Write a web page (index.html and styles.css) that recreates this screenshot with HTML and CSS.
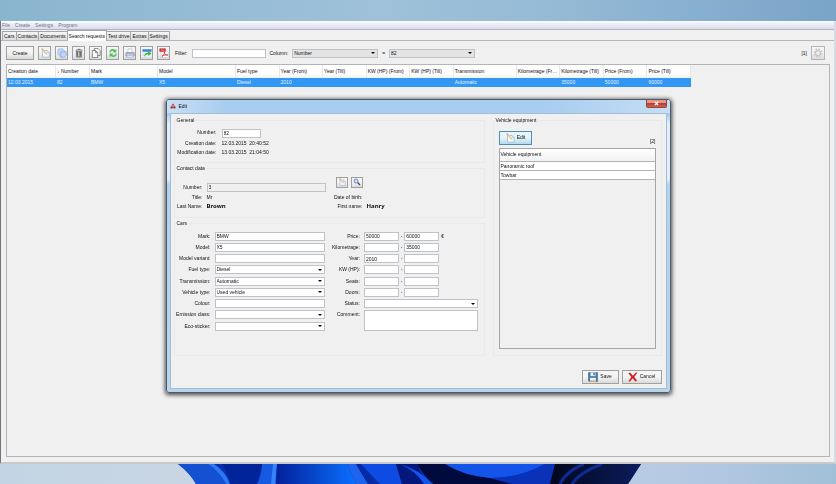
FILE: index.html
```
<!DOCTYPE html>
<html lang="en">
<head>
<meta charset="utf-8">
<meta name="viewport" content="width=device-width, initial-scale=1">
<title>Search requests</title>
<link rel="stylesheet" href="styles.css">
</head>
<body>

  <!-- shared icons -->
  <svg class="defs" aria-hidden="true">
    <symbol id="icon-edit" viewBox="0 0 24 24">
      <path d="M6 6h11l5 5v11H6z" fill="#f6f8ff" stroke="#8ba3cf" stroke-width="1.5"/>
      <path d="M17 6v5h5" fill="#dbe5f8" stroke="#8ba3cf"/>
      <path d="M3 2l3-1 11 12 1 3-4-1z" fill="#f0c266"/>
      <path d="M3 2l3-1 2 2-3 2z" fill="#d99a8a"/>
    </symbol>
  </svg>

  <!-- Main window -->
  <div class="window">
    <nav class="menubar">
      <button>File</button>
      <button>Create</button>
      <button>Settings</button>
      <button>Program</button>
    </nav>

    <div class="tabs">
      <button class="tab">Cars</button>
      <button class="tab">Contacts</button>
      <button class="tab">Documents</button>
      <button class="tab active">Search requests</button>
      <button class="tab">Test drive</button>
      <button class="tab">Extras</button>
      <button class="tab">Settings</button>
    </div>

    <main class="panel">
      <div class="toolbar">
        <button class="btn create">Create</button>
        <button class="btn tool" aria-label="Edit"><svg><use href="#icon-edit"/></svg></button>
        <button class="btn tool" aria-label="Duplicate">
          <svg viewBox="0 0 24 24"><rect x="2" y="2" width="13" height="14" rx="2" fill="#dbe8fd" stroke="#8fadE3" stroke-width="1.5"/><rect x="5" y="5" width="13" height="14" rx="2" fill="#dbe8fd" stroke="#8fade3" stroke-width="1.5"/><path d="M9 9h13v9l-4 4H9z" fill="#c2d8fb" stroke="#6a92da" stroke-width="1.5"/></svg>
        </button>
        <button class="btn tool" aria-label="Delete">
          <svg viewBox="0 0 24 24"><path d="M5 7h14l-1 15H6z" fill="#8b8b8b" stroke="#666"/><path d="M8 9v11M16 9v11" stroke="#666" stroke-width="2"/><path d="M11 9v11" stroke="#ddd" stroke-width="2"/><ellipse cx="12" cy="6" rx="8" ry="2.5" fill="#bbb" stroke="#666"/><path d="M9 3h6" stroke="#666" stroke-width="2"/></svg>
        </button>
        <button class="btn tool" aria-label="Copy">
          <svg viewBox="0 0 24 24" fill="#fafafa" stroke="#666" stroke-width="1.8"><path d="M8 1h9l5 5v12H8z"/><path d="M3 6h8l5 5v12H3z"/><path d="M11 6v5h5" fill="none"/></svg>
        </button>
        <button class="btn tool" aria-label="Refresh">
          <svg viewBox="0 0 24 24" fill="#4fbf57"><path d="M3 11c0-8 9-11 14-6l3-3v9h-9l3-3c-3-3-7-1-8 3z"/><path d="M21 13c0 8-9 11-14 6l-3 3v-9h9l-3 3c3 3 7 1 8-3z"/></svg>
        </button>
        <button class="btn tool" aria-label="Print">
          <svg viewBox="0 0 24 24"><path d="M7 2h10v9H7z" fill="#fff" stroke="#8d98b0"/><path d="M2 11h20v8H2z" fill="#b9c2d6" stroke="#7c88a2" stroke-width="1.5"/><path d="M6 15h12l2 7H4z" fill="#eef3ff" stroke="#7886a5"/><path d="M8 18h8" stroke="#7b9ae0" stroke-width="1.5"/></svg>
        </button>
        <button class="btn tool" aria-label="Export">
          <svg viewBox="0 0 24 24"><path d="M1 3h22v18H1z" fill="#e7f1fb"/><path d="M1 3h22v6H1z" fill="#3d83cf"/><path d="M2 14h8M2 18h6" stroke="#9fb6d0"/><path d="M5 21c1-7 5-10 10-10V7l8 6-8 6v-4c-4 0-7 2-10 6z" fill="#3eb93c"/></svg>
        </button>
        <button class="btn tool" aria-label="PDF">
          <svg viewBox="0 0 24 24"><path d="M5 5h12l5 5v13H5z" fill="#fff" stroke="#a9a9a9"/><path d="M1 1h15v8H1z" fill="#c8222b"/><path d="M4 5h9" stroke="#f3b6b6" stroke-width="2"/><path d="M7 20c4-2 6-6 6-10 1 5 3 7 8 7-6-1-10 0-14 3z" fill="none" stroke="#d8232a" stroke-width="2"/></svg>
        </button>
        <label class="filter-label" for="filter">Filter:</label>
        <input class="filter" type="text" id="filter">
        <label for="column">Column:</label>
        <select class="drop grey" id="column"><option>Number</option></select>
        <label for="columnValue">=</label>
        <select class="drop grey" id="columnValue"><option>82</option></select>
        <span class="count">[1]</span>
        <button class="btn tool gear" aria-label="Table settings">
          <svg viewBox="0 0 24 24" fill="none" stroke="#c4c4c4"><circle cx="12" cy="12" r="6" stroke-width="3"/><circle cx="12" cy="12" r="9.500" stroke-width="3" stroke-dasharray="4 3.460"/></svg>
        </button>
      </div>

      <div class="requests">
        <table>
          <colgroup>
            <col class="w-date"><col class="w-number"><col class="w-mark"><col class="w-model">
            <col><col><col><col><col>
            <col class="w-trans"><col><col><col><col>
          </colgroup>
          <thead>
            <tr>
              <th>Creation date</th><th>↓ Number</th><th>Mark</th><th>Model</th><th>Fuel type</th>
              <th>Year (From)</th><th>Year (Till)</th><th>KW (HP) (From)</th><th>KW (HP) (Till)</th>
              <th>Transmission</th><th>Kilometrage (Fr…</th><th>Kilometrage (Till)</th>
              <th>Price (From)</th><th>Price (Till)</th>
            </tr>
          </thead>
          <tbody>
            <tr class="selected">
              <td>12.03.2015</td><td>82</td><td>BMW</td><td>X5</td><td>Diesel</td>
              <td>2010</td><td></td><td></td><td></td>
              <td>Automatic</td><td></td><td>35000</td><td>50000</td><td>60000</td>
            </tr>
          </tbody>
        </table>
      </div>
    </main>
  </div>

  <!-- Desktop wallpaper under the window -->
  <svg class="wallpaper" viewBox="0 0 836 20" preserveAspectRatio="none" aria-hidden="true">
    <defs>
      <linearGradient id="petal"><stop offset="0" stop-color="#02209a"/><stop offset="1" stop-color="#0a70ff"/></linearGradient>
      <linearGradient id="dark"><stop offset="0" stop-color="#02061d"/><stop offset="1" stop-color="#0a1d5c"/></linearGradient>
    </defs>
    <path d="M178 0H641L628 20H196Q190 9 178 0z" fill="#0a2fae"/>
    <path d="M178 0H208Q220 8 226 20H196Q190 9 178 0z" fill="#1450d2"/>
    <path d="M208 0H214Q226 8 230 20H226Q220 8 208 0z" fill="#2b78f4"/>
    <path d="M222 0H262Q260 10 257 20H230Q228 9 222 0z" fill="#02249a"/>
    <path d="M262 0H277L276 20H257Q262 10 262 0z" fill="#1659e2"/>
    <path d="M273 0H277L275 20H271z" fill="#3684fa"/>
    <path d="M277 0H347L356 20H276z" fill="url(#petal)"/>
    <path d="M347 0H356L368 20H356z" fill="#1d63ee"/>
    <path d="M356 0H361L376 20H368z" fill="#062aa4"/>
    <path d="M361 0H396L402 20H380z" fill="#0d4be2"/>
    <path d="M396 0H417Q420 10 430 20H402z" fill="#03177c"/>
    <path d="M417 0H450Q468 11 490 14L520 20H433Q424 12 417 0z" fill="#010a3c"/>
    <path d="M400 0Q418 5 433 20H424Q416 7 400 0z" fill="#1255ee"/>
    <path d="M445 0H545Q520 14 490 14Q464 12 445 0z" fill="#1454ea"/>
    <path d="M545 0H558L550 20H512Q500 17 490 14Q520 14 545 0z" fill="#0a32b8"/>
    <path d="M555 0H641L628 20H550z" fill="url(#dark)"/>
    <path d="M584 0Q566 7 560 20M602 0Q580 8 572 20" fill="none" stroke="#0d2b92" stroke-width="3"/>
  </svg>

  <!-- Edit dialog -->
  <div class="overlay">
    <form class="dialog" role="dialog" aria-label="Edit">
      <div class="titlebar">
        <svg class="logo" viewBox="0 0 24 24"><path d="M12 1l5 8H7z" fill="#a33"/><path d="M3 13q9-8 18 0l2 8H1z" fill="#c33d3d"/><path d="M6 13h12" stroke="#dfe8f4" stroke-width="2"/><circle cx="6" cy="19" r="2.500" fill="#5b2d35"/><circle cx="18" cy="19" r="2.500" fill="#5b2d35"/></svg>
        <span>Edit</span>
        <button type="button" class="close" aria-label="Close"><svg viewBox="0 0 12 12"><path d="M2 2l8 8M10 2l-8 8" stroke="#fff" stroke-width="3"/></svg></button>
      </div>

      <div class="content">
        <div class="columns">
          <div class="left">
            <fieldset>
              <legend>General</legend>
              <div class="general">
                <label for="number">Number:</label>
                <input class="short" type="text" id="number" value="82">
                <span class="name">Creation date:</span><span class="stamp">12.03.2015&nbsp; 20:40:52</span>
                <span class="name">Modification date:</span><span class="stamp">13.03.2015&nbsp; 21:04:50</span>
              </div>
            </fieldset>

            <fieldset>
              <legend>Contact data</legend>
              <div class="contact">
                <label for="contactNumber">Number:</label>
                <input class="readonly" type="text" id="contactNumber" value="3" readonly>
                <div class="contact-buttons">
                  <button type="button" class="btn mini" aria-label="Edit contact"><svg><use href="#icon-edit"/></svg></button>
                  <button type="button" class="btn mini" aria-label="Find contact"><svg viewBox="0 0 24 24"><path d="M13 13l8 8" stroke="#444c66" stroke-width="4"/><circle cx="9" cy="9" r="6" fill="#cfe2fb" stroke="#5f7bb5" stroke-width="2.500"/></svg></button>
                </div>
                <span></span>
                <span class="name">Title:</span><span>Mr</span>
                <span class="name">Date of birth:</span><span></span>
                <span class="name">Last Name:</span><b>Brown</b>
                <span class="name">First name:</span><b>Hanry</b>
              </div>
            </fieldset>

            <fieldset>
              <legend>Cars</legend>
              <div class="cars">
                <label for="mark">Mark:</label><input type="text" id="mark" value="BMW">
                <label for="priceFrom">Price:</label>
                <div class="range"><input type="text" id="priceFrom" value="50000"><span>-</span><input type="text" value="60000" aria-label="Price till"><span>€</span></div>

                <label for="model">Model:</label><input type="text" id="model" value="X5">
                <label for="kmFrom">Kilometrage:</label>
                <div class="range"><input type="text" id="kmFrom"><span>-</span><input type="text" value="35000" aria-label="Kilometrage till"></div>

                <label for="variant">Model variant:</label><input type="text" id="variant">
                <label for="yearFrom">Year:</label>
                <div class="range"><input type="text" id="yearFrom" value="2010"><span>-</span><input type="text" aria-label="Year till"></div>

                <label for="fuel">Fuel type:</label><select class="drop" id="fuel"><option>Diesel</option></select>
                <label for="kwFrom">KW (HP):</label>
                <div class="range"><input type="text" id="kwFrom"><span>-</span><input type="text" aria-label="KW till"></div>

                <label for="transmission">Transmission:</label><select class="drop" id="transmission"><option>Automatic</option></select>
                <label for="seatsFrom">Seats:</label>
                <div class="range"><input type="text" id="seatsFrom"><span>-</span><input type="text" aria-label="Seats till"></div>

                <label for="vehicle">Vehicle type:</label><select class="drop" id="vehicle"><option>Used vehicle</option></select>
                <label for="doorsFrom">Doors:</label>
                <div class="range"><input type="text" id="doorsFrom"><span>-</span><input type="text" aria-label="Doors till"></div>

                <label for="colour">Colour:</label><input type="text" id="colour">
                <label for="status">Status:</label><select class="drop" id="status"><option></option></select>

                <label for="emission">Emission class:</label><select class="drop" id="emission"><option></option></select>
                <label for="comment">Comment:</label><textarea id="comment"></textarea>

                <label for="eco">Eco-sticker:</label><select class="drop" id="eco"><option></option></select>
              </div>
            </fieldset>
          </div>

          <fieldset class="equipment">
            <legend>Vehicle equipment</legend>
            <div class="equipment-body">
              <div class="equipment-head">
                <button type="button" class="btn edit"><svg><use href="#icon-edit"/></svg>Edit</button>
                <span>[2]</span>
              </div>
              <div class="equipment-list">
                <table>
                  <thead><tr><th>Vehicle equipment</th></tr></thead>
                  <tbody>
                    <tr><td>Panoramic roof</td></tr>
                    <tr><td>Towbar</td></tr>
                  </tbody>
                </table>
              </div>
            </div>
          </fieldset>
        </div>

        <div class="actions">
          <button type="button" class="btn save">
            <svg viewBox="0 0 24 24"><path d="M1 1h22v22H3l-2-2z" fill="#3f79ad" stroke="#2b4f77"/><path d="M6 1h12v9H6z" fill="#e8f2fa"/><path d="M13 2h3v6h-3z" fill="#35587f"/><path d="M5 14h14v9H5z" fill="#f4f4f4"/><path d="M5 20h14v3H5z" fill="#e2a65b"/></svg>
            Save
          </button>
          <button type="button" class="btn cancel">
            <svg viewBox="0 0 24 24"><path d="M1 3l4-2 7 8 7-8 4 0-8 11 7 9-4 2-7-8-6 8-4-1 7-10z" fill="#d21f1f"/></svg>
            Cancel
          </button>
        </div>
      </div>
    </form>
  </div>

</body>
</html>
```
FILE: styles.css
```
* {box-sizing: border-box}

body {
  display: flex;
  flex-direction: column;
  min-height: 100vh;
  margin: 0;
  padding-top: 21px;
  font-family: "Liberation Sans", Arial, sans-serif;
  font-size: 5px;
  line-height: 7px;
  color: #111;
  background: linear-gradient(to right, #8ab5cf, #9fc1da 45%, #96bbd6 65%, #7aa4c8);
}

button, input, select, textarea {
  margin: 0;
  font: inherit;
  color: inherit;
}

.defs {
  position: absolute;
  width: 0;
  height: 0;
}

/* Main window */
.window {
  display: flex;
  flex-direction: column;
  flex: 1;
  border-left: 1px solid #70757c;
  border-right: 2px solid #d9dbe6;
  border-bottom: 2px solid #c6c8cb;
  background-color: #f0f0f0;
}

.menubar {
  display: flex;
  gap: 5px;
  height: 9px;
  padding: 0 1px;
  border-top: 1px solid #fff;
  border-bottom: 1px solid #b4b5ba;
  background: linear-gradient(#f4f6fb, #d9dcee);
}

.menubar button {
  padding: 0;
  border: none;
  background: none;
  color: #6f7382;
}

.tabs {
  display: flex;
  align-items: flex-end;
  height: 10px;
  padding-left: 1px;
}

.tab {
  height: 9px;
  padding: 0 1px;
  border: 1px solid #a3a6aa;
  border-bottom: none;
  margin-right: -1px;
  background: linear-gradient(#f6f6f6, #dcdcdc);
  line-height: 8px;
}

.tab.active {
  height: 11px;
  margin-bottom: -1px;
  z-index: 1;
  background: #fff;
}

.panel {
  display: flex;
  flex-direction: column;
  flex: 1;
  gap: 4px;
  padding: 5px 4px 5px 5px;
  border-top: 1px solid #b4b6b9;
}

/* Toolbar */
.toolbar {
  display: flex;
  align-items: center;
  gap: 4px;
}

.btn {
  display: flex;
  align-items: center;
  justify-content: center;
  gap: 2px;
  height: 14px;
  padding: 0;
  border: 1px solid #a0a0a0;
  background: linear-gradient(#f5f5f5 45%, #dadada);
}

.btn svg {
  width: 10px;
  height: 10px;
}

.create {width: 28px;}
.tool {width: 13px;}
.gear {
  width: 14px;
  margin-right: 5px;
  border-color: #b5b5b5;
}

.filter-label {margin-left: 1px;}

input, textarea, .drop {
  width: 100%;
  min-width: 0;
  height: 9px;
  padding: 0 1px;
  border: 1px solid #bfc2c6;
  border-radius: 0;
  outline: none;
  background-color: #fff;
}

.filter {
  width: 74px;
}

.drop {
  appearance: none;
  background: #fff url("data:image/svg+xml,%3Csvg xmlns='http://www.w3.org/2000/svg' viewBox='0 0 8 4'%3E%3Cpath d='M0 0h8L4 4z'/%3E%3C/svg%3E") no-repeat right 2px center / 4px 2px;
}

.drop.grey {
  width: 86px;
  background-color: #e4e4e4;
}

.count {margin-left: auto;}

/* Search requests table */
table {
  border-collapse: collapse;
  table-layout: fixed;
}

th, td {
  padding: 0 1px;
  font-weight: normal;
  text-align: left;
  white-space: nowrap;
}

.requests {
  flex: 1;
  border: 1px solid #b2b4b8;
}

.requests table {width: 684px;}
.w-date {width: 49px;}
.w-number {width: 34px;}
.w-mark {width: 68px;}
.w-model {width: 78px;}
.w-trans {width: 63px;}

.requests th {
  height: 13px;
  background: linear-gradient(#fff 60%, #f1f2f3);
  box-shadow: inset -1px 0 #e8e9eb;
}

.requests td {height: 9px;}

.selected {
  background-color: #3297f3;
  color: #e2f1ff;
}

.wallpaper {
  display: block;
  width: 100%;
  height: 20px;
  background: linear-gradient(to right, #c3d5e4, #c8d6e4 20%, #b7cae4 80%, #a1bfd7);
}

/* Edit dialog */
.overlay {
  position: fixed;
  inset: 0;
  display: flex;
  align-items: center;
  justify-content: center;
  padding-top: 7px;
}

.dialog {
  width: 60%;
  min-width: 505px;
  padding: 0 3px 3px;
  border: 1px solid #4d5b69;
  border-radius: 3px;
  background: linear-gradient(#a9cdf0 5%, #e2eef9 8%, #e2eef9 27%, #b3d2ee 29%, #b9d5ee);
  box-shadow: 0 1px 4px 1px rgba(0, 0, 0, 0.7);
}

.titlebar {
  display: flex;
  align-items: center;
  gap: 3px;
  height: 13px;
  margin: 0 -3px;
  padding-left: 3px;
  border-radius: 2px 2px 0 0;
  background: linear-gradient(to right, #c8dff5, #a8cdf0 12%, #a8cdf0 75%, #c6def5);
}

.logo {
  width: 6px;
  height: 6px;
}

.close {
  display: flex;
  align-items: center;
  justify-content: center;
  align-self: flex-start;
  width: 21px;
  height: 8px;
  margin: 0 3px 0 auto;
  padding: 0;
  border: 1px solid #8d4a44;
  border-top: none;
  border-radius: 0 0 2px 2px;
  background: linear-gradient(#dd9a8b 45%, #c23b2a 50%, #d35f49);
}

.close svg {
  width: 5px;
  height: 5px;
}

.content {
  padding: 3px 4px 4px 3px;
  border: 1px solid #a4bdd4;
  background-color: #f0f0f0;
}

.columns {
  display: flex;
  gap: 8px;
}

.left {
  display: flex;
  flex-direction: column;
  flex: 1;
  gap: 2px;
}

fieldset {
  min-width: 0;
  margin: 0;
  padding: 0;
  border: 1px solid #e7e9eb;
}

legend {
  margin-left: 1px;
  padding: 0 1px;
}

.general, .contact, .cars {
  display: grid;
}

.general label, .contact label, .cars label, .name {
  text-align: right;
  white-space: nowrap;
}

.general {
  grid-template-columns: 42px 1fr;
  gap: 2px 5px;
  padding: 5px 0 6px;
}

.short {width: 39px;}

.stamp {white-space: nowrap;}

.contact {
  grid-template-columns: 28px 117fr 33px 115fr;
  grid-template-rows: 15px 7px 7px;
  gap: 2px 4px;
  align-items: end;
  padding: 5px 0 7px;
}

.contact label {padding-bottom: 1px;}

.contact b {
  font-family: "Noto Sans", sans-serif;
  font-size: 6px;
}

.readonly {background-color: #f0f0f0;}

.contact-buttons {
  display: flex;
  align-self: start;
  justify-content: flex-end;
  gap: 3px;
}

.mini {
  width: 12px;
  height: 11px;
}

.mini svg {
  width: 8px;
  height: 8px;
}

.cars {
  grid-template-columns: 36px 110fr 31px 114fr;
  grid-template-rows: repeat(9, 9px);
  align-content: space-between;
  column-gap: 4px;
  height: 99px;
  margin: 5px 5px 24px 0;
}

.cars label {line-height: 9px;}

.cars textarea {
  display: block;
  grid-row: 8 / 10;
  grid-column: 4;
  height: 100%;
  resize: none;
}

.range {
  display: grid;
  grid-template-columns: 35fr 5px 35fr 39fr;
}

.range span {
  line-height: 9px;
  text-align: center;
}

.range input + span:last-child {
  padding-left: 2px;
  text-align: left;
}

/* Vehicle equipment */
.equipment {width: 169px;}

.equipment-body {
  display: flex;
  flex-direction: column;
  gap: 3px;
  height: 100%;
  padding: 7px 5px 6px;
}

.equipment-head {
  display: flex;
  align-items: flex-end;
  justify-content: space-between;
}

.edit {
  width: 33px;
  border-color: #4f8fae;
  background: linear-gradient(#e6f4fb 45%, #b4dbee);
}

.equipment-list {
  flex: 1;
  border: 1px solid #a3a5a9;
}

.equipment-list table {width: 100%;}

.equipment-list th {
  height: 13px;
  background: linear-gradient(#fff, #f1f2f3);
}

.equipment-list td {
  height: 9px;
  border-top: 1px solid #b2b2b2;
  border-bottom: 1px solid #b2b2b2;
  background-color: #fff;
}

.actions {
  display: flex;
  justify-content: flex-end;
  gap: 3px;
  padding-top: 14px;
}

.save {width: 37px;}
.cancel {width: 40px;}
```
